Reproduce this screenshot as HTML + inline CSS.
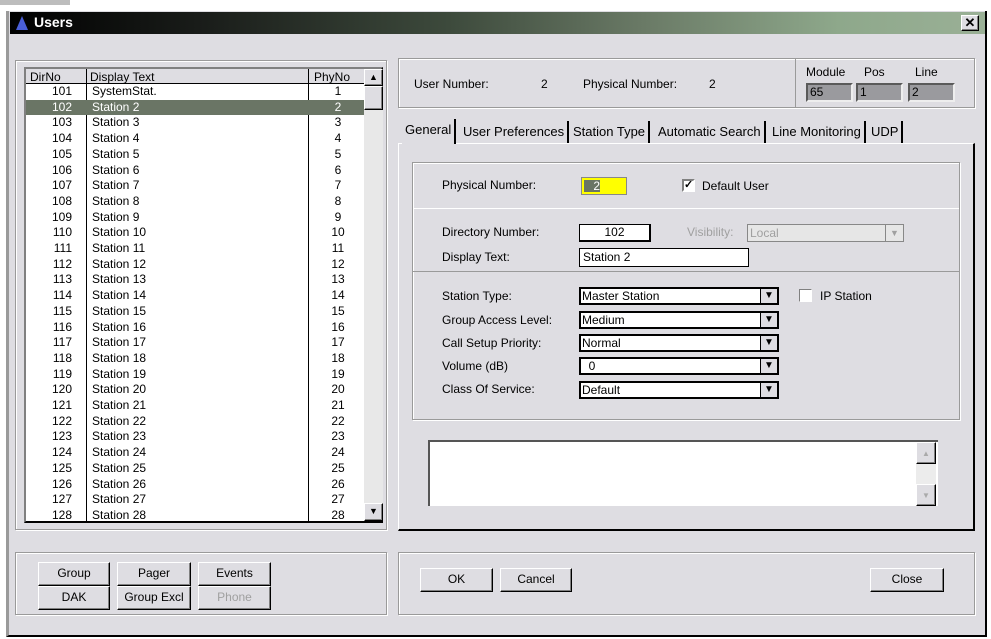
<!DOCTYPE html>
<html><head><meta charset="utf-8"><style>
*{box-sizing:border-box;margin:0;padding:0}
body{width:991px;height:639px;background:#fff;position:relative;overflow:hidden;font-family:"Liberation Sans Narrow","Liberation Sans",sans-serif;font-size:12px;color:#000}
.a{position:absolute}
.win{left:6px;top:11px;width:981px;height:626px;background:#dedde2;border-left:3px solid #9a9a9a;border-right:2px solid #000;border-bottom:2px solid #000}
.title{left:10px;top:12px;width:975px;height:22px;background:linear-gradient(90deg,#000 0%,#1a1d1a 20%,#3d4a3c 45%,#6a7a66 65%,#8ea88b 85%,#9ab096 100%)}
.grp{border:1px solid #9a9a9a;box-shadow:inset 1px 1px 0 #fff,1px 1px 0 #fff}
.sunk{border:2px solid;border-color:#808080 #fff #fff #808080}
.btn{background:#dedde2;border:1px solid;border-color:#fff #000 #000 #fff;box-shadow:inset -1px -1px 0 #808080;text-align:center;line-height:21px}
.row{position:absolute;left:0;width:338px;height:15.7px;line-height:15.7px}
.row span{position:absolute}
.c1{left:0;width:60px;text-align:right;padding-right:14px}
.c2{left:66px}
.c3{left:286px;width:52px;text-align:center}
.cb{position:absolute;left:579px;width:200px;height:18px;background:#fff;border:2px solid #000;line-height:14px;padding-left:1px}
.cb i{position:absolute;right:0;top:0;width:17px;height:14px;background:#dedde2;border-left:1px solid #000;font-style:normal;text-align:center;font-size:10px}
.lbl{position:absolute;left:442px}
.tab{position:absolute;top:121px;height:22px;line-height:22px;padding:0 3px;border-right:2px solid #000;font-size:13px}
</style></head><body>
<div class="a" style="left:0;top:0;width:70px;height:5px;background:#bdbdbd"></div>
<div class="a win"></div>
<div class="a title"></div>
<div class="a" style="left:16px;top:16px;width:0;height:0;border-left:6px solid transparent;border-right:6px solid transparent;border-bottom:14px solid #4a5fd8"></div>
<div class="a" style="left:34px;top:14px;color:#fff;font-weight:bold;font-family:'Liberation Sans',sans-serif;font-size:14px">Users</div>
<div class="a btn" style="left:961px;top:15px;width:18px;height:16px;line-height:14px;font-weight:bold;font-size:13px">✕</div>

<!-- list group -->
<div class="a grp" style="left:15px;top:60px;width:372px;height:470px"></div>
<div class="a" style="left:24px;top:67px;width:359px;height:456px;background:#fff;border:2px solid #000;border-top-color:#808080;border-left-color:#808080">
 <div class="a" style="left:0;top:0;width:338px;height:15px;background:#dedde2;border-bottom:1px solid #000"></div>
 <div class="a" style="left:4px;top:1px">DirNo</div>
 <div class="a" style="left:64px;top:1px">Display Text</div>
 <div class="a" style="left:288px;top:1px">PhyNo</div>
 <div class="a" style="left:60px;top:0;width:1px;height:452px;background:#000"></div>
 <div class="a" style="left:282px;top:0;width:1px;height:452px;background:#000"></div>
 <div class="a" style="left:338px;top:0;width:19px;height:452px;background:#e8e8e8"></div>
 <div class="a btn" style="left:338px;top:0;width:19px;height:17px;line-height:14px;font-size:9px">▲</div>
 <div class="a btn" style="left:338px;top:17px;width:19px;height:24px"></div>
 <div class="a btn" style="left:338px;top:434px;width:19px;height:18px;line-height:15px;font-size:9px">▼</div>
 <div class="a" style="left:0;top:15px;width:338px;height:437px">
 <div class="row" style="top:0"><span class="c1">101</span><span class="c2">SystemStat.</span><span class="c3">1</span></div>
 <div class="row" style="top:15.7px;background:#6a7565;color:#fff"><span class="c1">102</span><span class="c2">Station 2</span><span class="c3">2</span></div>
 <div class="row" style="top:31.4px"><span class="c1">103</span><span class="c2">Station 3</span><span class="c3">3</span></div>
 <div class="row" style="top:47.1px"><span class="c1">104</span><span class="c2">Station 4</span><span class="c3">4</span></div>
 <div class="row" style="top:62.8px"><span class="c1">105</span><span class="c2">Station 5</span><span class="c3">5</span></div>
 <div class="row" style="top:78.5px"><span class="c1">106</span><span class="c2">Station 6</span><span class="c3">6</span></div>
 <div class="row" style="top:94.2px"><span class="c1">107</span><span class="c2">Station 7</span><span class="c3">7</span></div>
 <div class="row" style="top:109.9px"><span class="c1">108</span><span class="c2">Station 8</span><span class="c3">8</span></div>
 <div class="row" style="top:125.6px"><span class="c1">109</span><span class="c2">Station 9</span><span class="c3">9</span></div>
 <div class="row" style="top:141.3px"><span class="c1">110</span><span class="c2">Station 10</span><span class="c3">10</span></div>
 <div class="row" style="top:157px"><span class="c1">111</span><span class="c2">Station 11</span><span class="c3">11</span></div>
 <div class="row" style="top:172.7px"><span class="c1">112</span><span class="c2">Station 12</span><span class="c3">12</span></div>
 <div class="row" style="top:188.4px"><span class="c1">113</span><span class="c2">Station 13</span><span class="c3">13</span></div>
 <div class="row" style="top:204.1px"><span class="c1">114</span><span class="c2">Station 14</span><span class="c3">14</span></div>
 <div class="row" style="top:219.8px"><span class="c1">115</span><span class="c2">Station 15</span><span class="c3">15</span></div>
 <div class="row" style="top:235.5px"><span class="c1">116</span><span class="c2">Station 16</span><span class="c3">16</span></div>
 <div class="row" style="top:251.2px"><span class="c1">117</span><span class="c2">Station 17</span><span class="c3">17</span></div>
 <div class="row" style="top:266.9px"><span class="c1">118</span><span class="c2">Station 18</span><span class="c3">18</span></div>
 <div class="row" style="top:282.6px"><span class="c1">119</span><span class="c2">Station 19</span><span class="c3">19</span></div>
 <div class="row" style="top:298.3px"><span class="c1">120</span><span class="c2">Station 20</span><span class="c3">20</span></div>
 <div class="row" style="top:314px"><span class="c1">121</span><span class="c2">Station 21</span><span class="c3">21</span></div>
 <div class="row" style="top:329.7px"><span class="c1">122</span><span class="c2">Station 22</span><span class="c3">22</span></div>
 <div class="row" style="top:345.4px"><span class="c1">123</span><span class="c2">Station 23</span><span class="c3">23</span></div>
 <div class="row" style="top:361.1px"><span class="c1">124</span><span class="c2">Station 24</span><span class="c3">24</span></div>
 <div class="row" style="top:376.8px"><span class="c1">125</span><span class="c2">Station 25</span><span class="c3">25</span></div>
 <div class="row" style="top:392.5px"><span class="c1">126</span><span class="c2">Station 26</span><span class="c3">26</span></div>
 <div class="row" style="top:408.2px"><span class="c1">127</span><span class="c2">Station 27</span><span class="c3">27</span></div>
 <div class="row" style="top:423.9px"><span class="c1">128</span><span class="c2">Station 28</span><span class="c3">28</span></div>
 </div>
</div>

<!-- top right info -->
<div class="a grp" style="left:398px;top:58px;width:577px;height:50px"></div>
<div class="a" style="left:795px;top:59px;width:1px;height:48px;background:#9a9a9a"></div>
<div class="a" style="left:414px;top:77px">User Number:</div>
<div class="a" style="left:541px;top:77px">2</div>
<div class="a" style="left:583px;top:77px">Physical Number:</div>
<div class="a" style="left:709px;top:77px">2</div>
<div class="a" style="left:806px;top:65px">Module</div>
<div class="a" style="left:864px;top:65px">Pos</div>
<div class="a" style="left:915px;top:65px">Line</div>
<div class="a sunk" style="left:806px;top:83px;width:47px;height:19px;background:#9a9a9e;border-color:#5a5a5a #eee #eee #5a5a5a;padding-left:2px;line-height:15px">65</div>
<div class="a sunk" style="left:856px;top:83px;width:47px;height:19px;background:#9a9a9e;border-color:#5a5a5a #eee #eee #5a5a5a;padding-left:2px;line-height:15px">1</div>
<div class="a sunk" style="left:908px;top:83px;width:47px;height:19px;background:#9a9a9e;border-color:#5a5a5a #eee #eee #5a5a5a;padding-left:2px;line-height:15px">2</div>

<!-- tabs -->
<div class="a" style="left:398px;top:143px;width:577px;height:388px;border-left:1px solid #fff;border-top:1px solid #fff;border-right:2px solid #000;border-bottom:2px solid #000"></div>
<div class="tab" style="left:402px;top:119px;border-right:2px solid #000;background:#dedde2;height:25px">General</div>
<div class="tab" style="left:460px">User Preferences</div>
<div class="tab" style="left:570px">Station Type</div>
<div class="tab" style="left:655px">Automatic Search</div>
<div class="tab" style="left:769px">Line Monitoring</div>
<div class="tab" style="left:868px">UDP</div>

<div class="a grp" style="left:412px;top:162px;width:548px;height:258px"></div>
<div class="a" style="left:413px;top:208px;width:546px;height:1px;background:#9a9a9a;border-bottom:1px solid #fff"></div>
<div class="a" style="left:413px;top:271px;width:546px;height:1px;background:#9a9a9a"></div>

<div class="lbl" style="top:178px">Physical Number:</div>
<div class="a" style="left:581px;top:177px;width:46px;height:18px;background:#ffff00;border:1px solid #888"><div class="a" style="left:2px;top:2px;width:16px;height:12px;background:#6a7565;color:#fff;text-align:right;line-height:12px">2</div></div>
<div class="a" style="left:682px;top:179px;width:13px;height:13px;background:#fff;border:2px solid;border-color:#808080 #fff #fff #808080;font-size:11px;line-height:9px;text-align:center;font-weight:bold">✓</div>
<div class="a" style="left:702px;top:179px">Default User</div>

<div class="lbl" style="top:225px">Directory Number:</div>
<div class="a" style="left:579px;top:224px;width:72px;height:18px;background:#fff;border:1px solid #000;border-width:1px 2px 2px 1px;text-align:center;line-height:15px">102</div>
<div class="a" style="left:687px;top:225px;color:#a0a0a0">Visibility:</div>
<div class="a" style="left:747px;top:224px;width:157px;height:18px;background:#e6e6e6;border:1px solid #888;color:#a0a0a0;line-height:16px;padding-left:2px">Local<i style="position:absolute;right:0;top:0;width:18px;height:16px;border-left:1px solid #888;font-style:normal;text-align:center;font-size:9px">▼</i></div>
<div class="lbl" style="top:250px">Display Text:</div>
<div class="a" style="left:579px;top:248px;width:170px;height:19px;background:#fff;border:1px solid #000;line-height:17px;padding-left:3px">Station 2</div>

<div class="lbl" style="top:289px">Station Type:</div>
<div class="cb" style="top:287px">Master Station<i>▼</i></div>
<div class="a" style="left:799px;top:289px;width:13px;height:13px;background:#fff;border:1px solid;border-color:#808080 #fff #fff #808080"></div>
<div class="a" style="left:820px;top:289px">IP Station</div>
<div class="lbl" style="top:313px">Group Access Level:</div>
<div class="cb" style="top:311px">Medium<i>▼</i></div>
<div class="lbl" style="top:336px">Call Setup Priority:</div>
<div class="cb" style="top:334px">Normal<i>▼</i></div>
<div class="lbl" style="top:359px">Volume (dB)</div>
<div class="cb" style="top:357px">&nbsp;&nbsp;0<i>▼</i></div>
<div class="lbl" style="top:382px">Class Of Service:</div>
<div class="cb" style="top:381px">Default<i>▼</i></div>

<div class="a" style="left:428px;top:440px;width:510px;height:66px;background:#fff;border-top:2px solid #555;border-left:2px solid #555">
 <div class="a" style="left:486px;top:0;width:20px;height:64px;background:#ececec"></div>
 <div class="a btn" style="left:486px;top:0;width:20px;height:22px;color:#aaa;font-size:8px">▲</div>
 <div class="a btn" style="left:486px;top:42px;width:20px;height:22px;color:#aaa;font-size:8px">▼</div>
</div>

<!-- bottom groups -->
<div class="a grp" style="left:15px;top:552px;width:372px;height:63px"></div>
<div class="a btn" style="left:38px;top:562px;width:72px;height:24px">Group</div>
<div class="a btn" style="left:117px;top:562px;width:74px;height:24px">Pager</div>
<div class="a btn" style="left:198px;top:562px;width:73px;height:24px">Events</div>
<div class="a btn" style="left:38px;top:586px;width:72px;height:24px">DAK</div>
<div class="a btn" style="left:117px;top:586px;width:74px;height:24px">Group Excl</div>
<div class="a btn" style="left:198px;top:586px;width:73px;height:24px;color:#a0a0a0">Phone</div>

<div class="a grp" style="left:398px;top:552px;width:577px;height:63px"></div>
<div class="a btn" style="left:420px;top:568px;width:73px;height:24px">OK</div>
<div class="a btn" style="left:500px;top:568px;width:72px;height:24px">Cancel</div>
<div class="a btn" style="left:870px;top:568px;width:74px;height:24px">Close</div>
</body></html>
